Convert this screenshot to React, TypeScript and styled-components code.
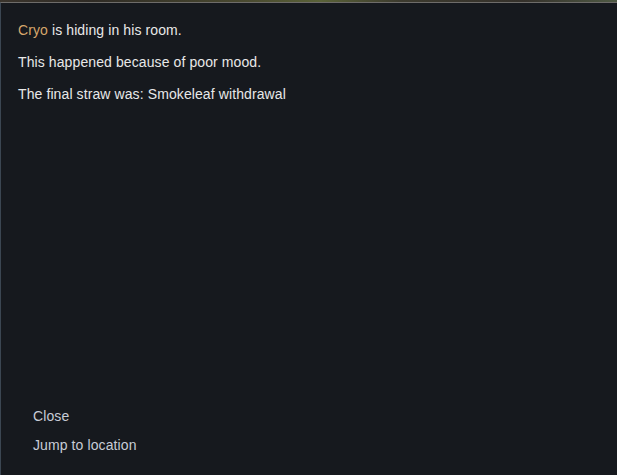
import React from "react";
import styled, { createGlobalStyle } from "styled-components";

const Global = createGlobalStyle`
  html, body { margin: 0; padding: 0; background: #16191e; }
  body { font-family: "Liberation Sans", Arial, sans-serif; }
  #root { height: 475px; }
`;

const Screen = styled.div`
  width: 617px;
  height: 475px;
  display: flex;
  flex-direction: column;
  overflow: hidden;
`;

const SceneStrip = styled.div`
  height: 2px;
  flex: none;
  background: linear-gradient(90deg, #3a342c 0%, #2f2b25 15%, #4a4a30 40%, #5a6238 52%, #3c3a2e 65%, #35312b 85%, #4f5a44 100%);
`;

const Panel = styled.div`
  flex: 1;
  display: flex;
  flex-direction: column;
  background: #16191e;
  border-top: 1px solid #6e6c6a;
  border-left: 1px solid #3b4652;
  padding: 20px 0 22px 17px;
`;

const Message = styled.div`
  flex: 1;
  display: flex;
  flex-direction: column;
  gap: 17px;
`;

const Line = styled.p`
  margin: 0;
  font-size: 14px;
  letter-spacing: 0.1px;
  line-height: 15px;
  color: #e8e8e8;
`;

const Name = styled.span`
  color: #d6a76c;
`;

const Actions = styled.div`
  display: flex;
  flex-direction: column;
  gap: 14px;
  padding-left: 15px;
`;

const ActionButton = styled.button`
  all: unset;
  align-self: flex-start;
  font-family: "Liberation Sans", Arial, sans-serif;
  font-size: 14px;
  letter-spacing: 0.1px;
  line-height: 15px;
  color: #c7ccd6;
  cursor: pointer;
`;

export default function App() {
  return (
    <>
      <Global />
      <Screen>
        <SceneStrip />
        <Panel>
          <Message>
            <Line>
              <Name>Cryo</Name> is hiding in his room.
            </Line>
            <Line>This happened because of poor mood.</Line>
            <Line>The final straw was: Smokeleaf withdrawal</Line>
          </Message>
          <Actions>
            <ActionButton>Close</ActionButton>
            <ActionButton>Jump to location</ActionButton>
          </Actions>
        </Panel>
      </Screen>
    </>
  );
}
